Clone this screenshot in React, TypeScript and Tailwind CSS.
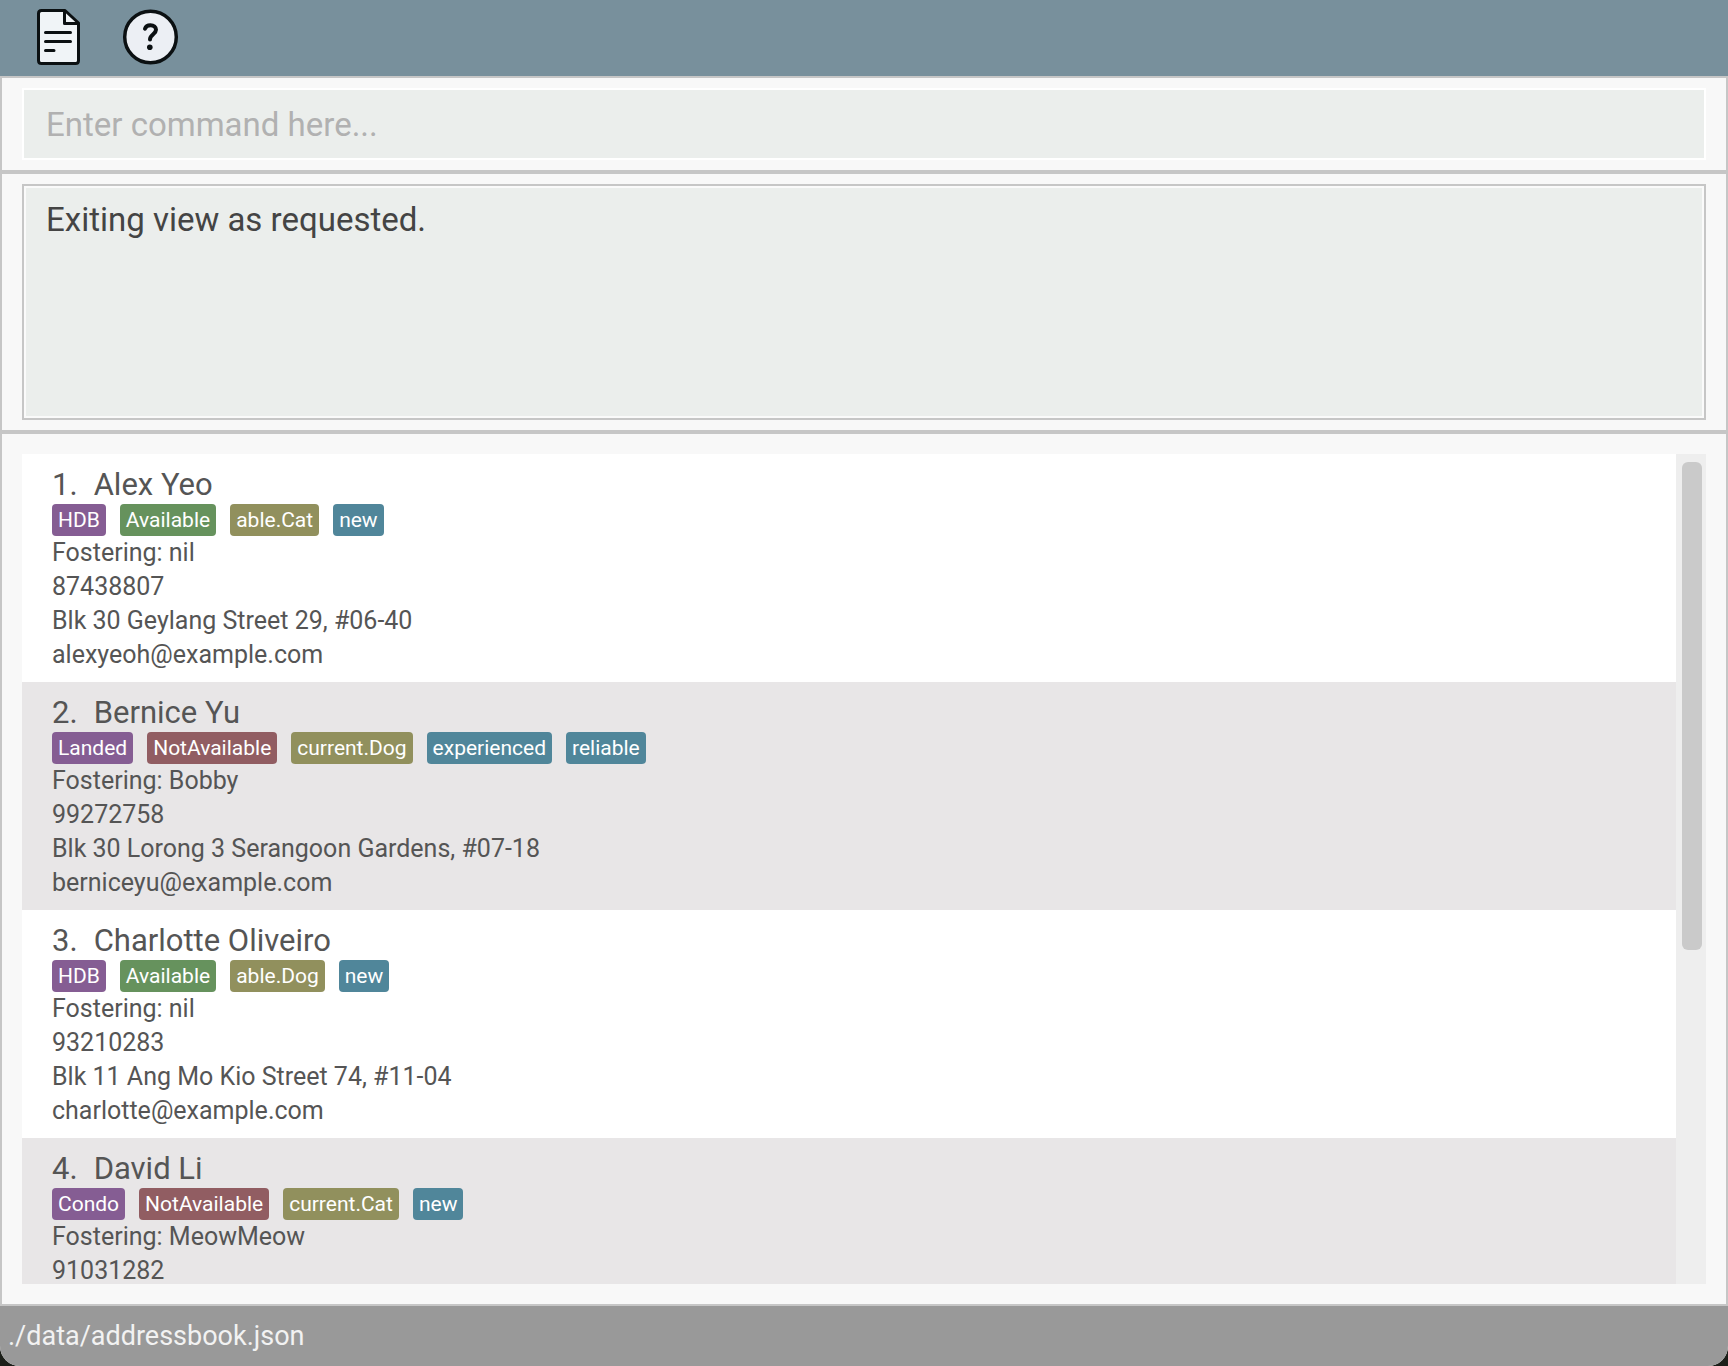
import React from "react";

type Tag = { label: string; kind: "home" | "yes" | "no" | "pref" | "note" };
type Person = { name: string; tags: Tag[]; details: string[] };

const tagColors: Record<Tag["kind"], string> = {
  home: "bg-[#855d93]",
  yes: "bg-[#66925d]",
  no: "bg-[#915d62]",
  pref: "bg-[#91905d]",
  note: "bg-[#50869a]",
};

const people: Person[] = [
  {
    name: "Alex Yeo",
    tags: [
      { label: "HDB", kind: "home" },
      { label: "Available", kind: "yes" },
      { label: "able.Cat", kind: "pref" },
      { label: "new", kind: "note" },
    ],
    details: ["Fostering: nil", "87438807", "Blk 30 Geylang Street 29, #06-40", "alexyeoh@example.com"],
  },
  {
    name: "Bernice Yu",
    tags: [
      { label: "Landed", kind: "home" },
      { label: "NotAvailable", kind: "no" },
      { label: "current.Dog", kind: "pref" },
      { label: "experienced", kind: "note" },
      { label: "reliable", kind: "note" },
    ],
    details: ["Fostering: Bobby", "99272758", "Blk 30 Lorong 3 Serangoon Gardens, #07-18", "berniceyu@example.com"],
  },
  {
    name: "Charlotte Oliveiro",
    tags: [
      { label: "HDB", kind: "home" },
      { label: "Available", kind: "yes" },
      { label: "able.Dog", kind: "pref" },
      { label: "new", kind: "note" },
    ],
    details: ["Fostering: nil", "93210283", "Blk 11 Ang Mo Kio Street 74, #11-04", "charlotte@example.com"],
  },
  {
    name: "David Li",
    tags: [
      { label: "Condo", kind: "home" },
      { label: "NotAvailable", kind: "no" },
      { label: "current.Cat", kind: "pref" },
      { label: "new", kind: "note" },
    ],
    details: ["Fostering: MeowMeow", "91031282"],
  },
];

function FileIcon() {
  return (
    <svg width="46" height="58" viewBox="0 0 46 58" fill="none" stroke="#0b1012" strokeWidth="3" strokeLinecap="round" strokeLinejoin="round" aria-hidden="true">
      <path d="M5.5 2.5H29L42.5 15V52.5Q42.5 55.5 39.5 55.5H5.5Q2.5 55.5 2.5 52.5V5.5Q2.5 2.5 5.5 2.5Z" fill="#f0f4f7" />
      <path d="M28.5 3V15.5H42" />
      <path d="M9.5 24.5H34.5M9.5 33.5H34.5M9.5 42.5H18" />
    </svg>
  );
}

function HelpIcon() {
  return (
    <svg width="58" height="58" viewBox="0 0 58 58" fill="none" aria-hidden="true">
      <circle cx="28.5" cy="29" r="25.8" fill="#eceff4" stroke="#0b1012" strokeWidth="3.5" />
      <path d="M23 20.8C23.6 18.7 25.8 17.2 28.5 17.2C31.8 17.2 34 19 34 21.8C34 26 28 26.5 28 31.5" stroke="#0b1012" strokeWidth="4" strokeLinecap="round" strokeLinejoin="round" />
      <circle cx="27.8" cy="39.2" r="2.8" fill="#0b1012" />
    </svg>
  );
}

function PersonCard({ person, index }: { person: Person; index: number }) {
  return (
    <li className="shrink-0 bg-white pt-3 pb-2.5 pl-[30px] text-[#555555] even:bg-[#e8e6e7]">
      <h2 className="flex gap-4 text-[31px] leading-[38px]">
        <span>{index}.</span>
        <span>{person.name}</span>
      </h2>
      <div className="flex gap-3.5">
        {person.tags.map((tag) => (
          <span key={tag.label} className={`rounded-sm px-1.5 text-[21px] leading-8 text-white ${tagColors[tag.kind]}`}>
            {tag.label}
          </span>
        ))}
      </div>
      {person.details.map((line) => (
        <p key={line} className="text-[25px] leading-[34px]">
          {line}
        </p>
      ))}
    </li>
  );
}

export default function App() {
  return (
    <div className="h-screen bg-[#1c1f19] font-['Roboto',sans-serif]">
      <div className="flex h-full flex-col overflow-hidden rounded-b-[20px] bg-[#f8f8f8]">
        <header className="flex h-[76px] shrink-0 items-start gap-10 bg-[#78909c] pt-2 pl-9">
          <button type="button" aria-label="File">
            <FileIcon />
          </button>
          <button type="button" aria-label="Help">
            <HelpIcon />
          </button>
        </header>
        <main className="flex min-h-0 flex-1 flex-col border-2 border-[#c6c6c6]">
          <section className="border-b-4 border-[#c6c6c6] px-5 py-2.5">
            <input
              type="text"
              aria-label="Command"
              placeholder="Enter command here..."
              className="block h-[72px] w-full border-2 border-white bg-[#ebeeec] px-[22px] text-[33px] text-[#444444] outline-none placeholder:text-[#b1b1b1]"
            />
          </section>
          <section className="border-b-4 border-[#c6c6c6] px-5 py-2.5">
            <div className="border-2 border-[#c6c6c6]">
              <textarea
                readOnly
                aria-label="Result"
                defaultValue="Exiting view as requested."
                className="block h-[232px] w-full resize-none border-2 border-[#fafafa] bg-[#ebeeec] px-5 pt-3 text-[33px] leading-10 text-[#444444] outline-none"
              />
            </div>
          </section>
          <section className="flex min-h-0 flex-1 p-5">
            <ul className="flex flex-1 flex-col overflow-hidden">
              {people.map((person, i) => (
                <PersonCard key={person.name} person={person} index={i + 1} />
              ))}
            </ul>
            <div className="w-[30px] bg-[#eeeeee] px-1.5 py-2">
              <div className="h-3/5 w-5 rounded-md bg-[#cacaca]" />
            </div>
          </section>
        </main>
        <footer className="flex h-[60px] shrink-0 items-center bg-[#999999] px-2 text-[27px] text-[#f2f2f2]">./data/addressbook.json</footer>
      </div>
    </div>
  );
}
